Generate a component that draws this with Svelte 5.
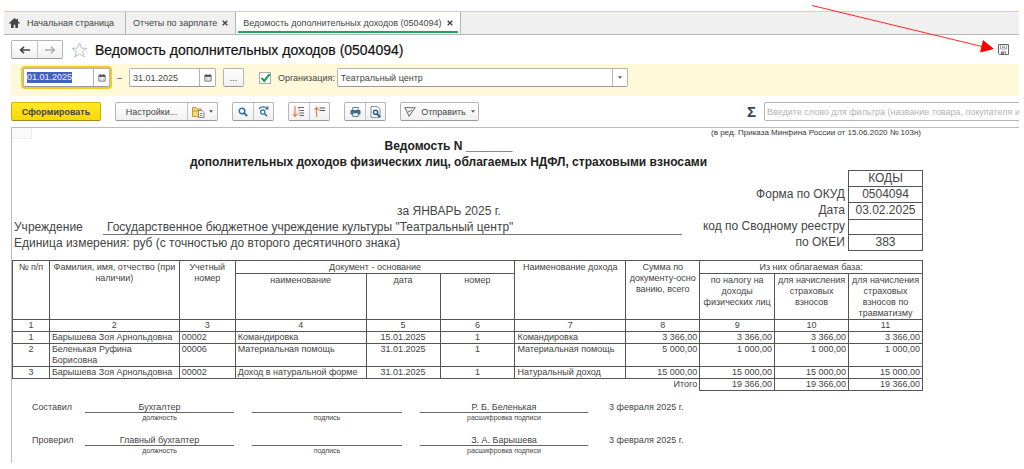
<script>
  const tabs = [
    { title: 'Начальная страница', home: true },
    { title: 'Отчеты по зарплате', closable: true },
    { title: 'Ведомость дополнительных доходов (0504094)', closable: true, active: true }
  ];
  let from = $state('01.01.2025');
  let to = $state('31.01.2025');
  let useOrg = $state(true);

  const columns = [37, 130, 56, 131, 74, 75, 111, 74, 75, 74, 74];
  const rows = [
    ['1', 'Барышева Зоя Арнольдовна', '00002', 'Командировка', '15.01.2025', '1', 'Командировка', '3 366,00', '3 366,00', '3 366,00', '3 366,00'],
    ['2', 'Беленькая Руфина\nБорисовна', '00006', 'Материальная помощь', '31.01.2025', '1', 'Материальная помощь', '5 000,00', '1 000,00', '1 000,00', '1 000,00'],
    ['3', 'Барышева Зоя Арнольдовна', '00002', 'Доход в натуральной форме', '31.01.2025', '1', 'Натуральный доход', '15 000,00', '15 000,00', '15 000,00', '15 000,00']
  ];
  const codes = [
    ['', 'КОДЫ'],
    ['Форма по ОКУД', '0504094'],
    ['Дата', '03.02.2025'],
    ['код по Сводному реестру', ''],
    ['по ОКЕИ', '383']
  ];
  const signers = [
    { role: 'Составил', post: 'Бухгалтер', name: 'Р. Б. Беленькая', date: '3 февраля 2025 г.' },
    { role: 'Проверил', post: 'Главный бухгалтер', name: 'З. А. Барышева', date: '3 февраля 2025 г.' }
  ];

  function align(i) {
    if (i === 0 || i === 4 || i === 5) return 'mid';
    return i > 6 ? 'num' : 'txt';
  }
</script>

{#snippet calendar()}
  <svg width="8" height="8" viewBox="0 0 9 9" aria-hidden="true">
    <path d="M1 1.5h7v6.5H1z" fill="#fff" stroke="#666" />
    <path d="M1 1h7v2.3H1z" fill="#555" />
    <path d="M2.5 0v2M6.5 0v2" stroke="#555" />
    <path d="M2 4.8h5M2 6.4h5" stroke="#999" stroke-width=".8" stroke-dasharray="1 .8" />
  </svg>
{/snippet}

{#snippet caret()}
  <svg class="caret" width="4" height="3" viewBox="0 0 4 3" aria-hidden="true"><path d="M0 .3h4L2 2.700z" fill="#555" /></svg>
{/snippet}

<div class="window">
  <nav class="tabs">
    {#each tabs as tab}
      <div class="tab" class:active={tab.active}>
        <a href="#tab">
          {#if tab.home}
            <svg width="11" height="10" viewBox="0 0 11 10" aria-hidden="true">
              <path d="M5.5 0 0 5l.8.9L2 4.9V10h2.7V6.8h1.6V10H9V4.9l1.2 1L11 5 9 3.2V.8H7.6v1.1z" fill="#444" />
            </svg>
          {/if}
          <span>{tab.title}</span>
        </a>
        {#if tab.closable}
          <button class="close" aria-label="Закрыть">
            <svg width="6" height="6" viewBox="0 0 6 6"><path d="M.7.7l4.6 4.6M5.3.7.7 5.3" stroke="#444" stroke-width="1.4" /></svg>
          </button>
        {/if}
      </div>
    {/each}
  </nav>

  <header class="title">
    <div class="group">
      <button class="nav" aria-label="Назад">
        <svg width="11" height="8" viewBox="0 0 11 8"><path d="M1.5 4H11M5 .8 1.6 4 5 7.2" fill="none" stroke="#444" stroke-width="1.6" /></svg>
      </button>
      <button class="nav" aria-label="Вперед">
        <svg width="11" height="8" viewBox="0 0 11 8"><path d="M0 4h9.5M6 .8 9.4 4 6 7.2" fill="none" stroke="#aaa" stroke-width="1.4" /></svg>
      </button>
    </div>
    <button class="plain star" aria-label="В избранное">
      <svg width="17" height="16" viewBox="0 0 17 16"><path d="M8.500 1l1.900 5.100 5.600.2-4.400 3.400 1.600 5.300-4.700-3.100-4.700 3.100 1.600-5.300L1 6.300l5.600-.2z" fill="#fff" stroke="#b9bfc6" /></svg>
    </button>
    <h1>Ведомость дополнительных доходов (0504094)</h1>
    <button class="plain save" aria-label="Сохранить">
      <svg width="11" height="11" viewBox="0 0 11 11">
        <path d="M.5.5h10v10h-9l-1-1z" fill="#fff" stroke="#666" />
        <path d="M2.500.5v4.500h6v-4.500M3.800 2h3.400M3.800 3.500h3.400" fill="none" stroke="#888" stroke-width=".8" />
        <path d="M3 7.500h5V10H3z" fill="#777" /><path d="M5.800 8.300h1.400V10H5.800z" fill="#fff" />
      </svg>
    </button>
  </header>

  <section class="filter">
    <div class="field date focus">
      <input aria-label="Начало периода" bind:value={from} size="10" />
      <span class="marked" aria-hidden="true">{from}</span>
      <button aria-label="Выбрать начало">{@render calendar()}</button>
    </div>
    <span class="dash">–</span>
    <div class="field date">
      <input aria-label="Конец периода" bind:value={to} size="10" />
      <button aria-label="Выбрать конец">{@render calendar()}</button>
    </div>
    <button class="btn dots">...</button>
    <label class="check">
      <input type="checkbox" aria-label="Отбор по организации" bind:checked={useOrg} />
      <span class="box">
        {#if useOrg}
          <svg width="11" height="10" viewBox="0 0 11 10" aria-hidden="true"><path d="M1.500 4.800 4.200 8 9.800 1.200" fill="none" stroke="#12994a" stroke-width="2" /></svg>
        {/if}
      </span>
    </label>
    <label class="orglabel" for="org">Организация:</label>
    <div class="field org">
      <select id="org"><option>Театральный центр</option></select>
      <span class="drop">{@render caret()}</span>
    </div>
  </section>

  <section class="tools">
    <button class="btn primary">Сформировать</button>
    <div class="group settings">
      <button class="wide">Настройки...</button>
      <button class="variant" aria-label="Варианты отчета">
        <svg width="13" height="12" viewBox="0 0 13 12" aria-hidden="true">
          <path d="M.5 10.500v-9h3.500l1 1.500h4v7.500z" fill="#f6d77c" stroke="#c8973a" />
          <path d="M1 5h8" stroke="#c8973a" />
          <path d="M6.500 4.500h3.500l2 2v5H6.500z" fill="#fff" stroke="#777" stroke-width=".9" />
          <path d="M8 7.500h2.500M8 9.300h2.500" stroke="#5f9b62" />
        </svg>
        {@render caret()}
      </button>
    </div>
    <div class="group">
      <button class="ic" aria-label="Найти">
        <svg width="10" height="10" viewBox="0 0 10 10"><circle cx="4" cy="4" r="2.800" fill="none" stroke="#2b6fa5" stroke-width="1.400" /><path d="M6 6l3.200 3.200" stroke="#2b6fa5" stroke-width="1.800" /></svg>
      </button>
      <button class="ic" aria-label="Найти далее">
        <svg width="11" height="11" viewBox="0 0 11 11"><path d="M1 2.800C2.500.6 7 .2 9 2.300M9.800.3v2.700H7" fill="none" stroke="#2b6fa5" stroke-width="1.200" /><circle cx="4.800" cy="6" r="2.200" fill="none" stroke="#2b6fa5" stroke-width="1.200" /><path d="M6.500 7.700l2.600 2.600" stroke="#2b6fa5" stroke-width="1.500" /></svg>
      </button>
    </div>
    <div class="group">
      <button class="ic" aria-label="Развернуть группы">
        <svg width="12" height="12" viewBox="0 0 12 12"><path d="M2 0v10M0 7.800 2 10.500l2-2.700" fill="none" stroke="#f0794d" stroke-width="1.200" /><path d="M5 1.500h6M7 4.500h4M7 7h4M7 9.500h4" stroke="#666" stroke-width="1.200" /><path d="M6 2v8" stroke="#999" stroke-width=".7" /></svg>
      </button>
      <button class="ic" aria-label="Свернуть группы">
        <svg width="12" height="12" viewBox="0 0 12 12"><path d="M2.500 11V1.500M.5 4l2-2.700 2 2.700" fill="none" stroke="#f0794d" stroke-width="1.200" /><path d="M5.500 2h5.500M5.500 4.500h5.500" stroke="#555" stroke-width="1.200" /></svg>
      </button>
    </div>
    <div class="group">
      <button class="ic" aria-label="Печать">
        <svg width="11" height="10" viewBox="0 0 12 11"><path d="M3 3.500V.6h6v2.900" fill="#fff" stroke="#50748f" /><rect x=".5" y="3.300" width="11" height="5" rx="1" fill="#41698a" /><path d="M3 6.500h6v3.800H3z" fill="#fff" stroke="#41698a" /></svg>
      </button>
      <button class="ic" aria-label="Предварительный просмотр">
        <svg width="11" height="12" viewBox="0 0 11 12"><path d="M1 .6h6.500L10 3v8.400H1z" fill="#fff" stroke="#888" /><circle cx="5.600" cy="6.300" r="2.100" fill="#fff" stroke="#185a94" stroke-width="1.400" /><path d="M7 7.800l3 3.200" stroke="#185a94" stroke-width="1.900" /></svg>
      </button>
    </div>
    <button class="btn send">
      <svg width="12" height="10" viewBox="0 0 12 10" aria-hidden="true"><path d="M.8.700h10.400L5 9.300 3.300 5.400 .8.700M3.300 5.400 8 3" fill="none" stroke="#666" /></svg>
      Отправить
      {@render caret()}
    </button>
    <span class="sigma">Σ</span>
    <input class="search" aria-label="Фильтр" placeholder="Введите слово для фильтра (название товара, покупателя и пр.)" />
  </section>

  <main class="report">
    <div class="corner"></div>
    <div class="sheet">
      <p class="note">(в ред. Приказа Минфина России от 15.06.2020 № 103н)</p>
      <h2>Ведомость N _______</h2>
      <h2>дополнительных доходов физических лиц, облагаемых НДФЛ, страховыми взносами</h2>

      <div class="head">
        <div class="info">
          <p class="period">за ЯНВАРЬ 2025 г.</p>
          <dl class="org-row">
            <dt>Учреждение</dt>
            <dd>Государственное бюджетное учреждение культуры "Театральный центр"</dd>
          </dl>
          <p>Единица измерения: руб (с точностью до второго десятичного знака)</p>
        </div>
        <table class="codes">
          <tbody>
            {#each codes as [label, code]}
              <tr><th>{label}</th><td>{code}</td></tr>
            {/each}
          </tbody>
        </table>
      </div>

      <table class="data">
        <colgroup>
          {#each columns as w}<col style:width="{w / 9.11}%" />{/each}
        </colgroup>
        <thead>
          <tr class="top">
            <th rowspan="2">№ п/п</th>
            <th rowspan="2">Фамилия, имя, отчество (при наличии)</th>
            <th rowspan="2">Учетный номер</th>
            <th colspan="3">Документ - основание</th>
            <th rowspan="2">Наименование дохода</th>
            <th rowspan="2" class="keep">Сумма по<br />документу-осно<br />ванию, всего</th>
            <th colspan="3">Из них облагаемая база:</th>
          </tr>
          <tr class="sub">
            <th>наименование</th>
            <th>дата</th>
            <th>номер</th>
            <th>по налогу на доходы физических лиц</th>
            <th>для начисления страховых взносов</th>
            <th>для начисления страховых взносов по травматизму</th>
          </tr>
          <tr>
            {#each columns as _, i}<th>{i + 1}</th>{/each}
          </tr>
        </thead>
        <tbody>
          {#each rows as row}
            <tr>
              {#each row as cell, i}<td class={align(i)}>{cell}</td>{/each}
            </tr>
          {/each}
        </tbody>
        <tfoot>
          <tr>
            <td class="num total" colspan="8">Итого</td>
            <td class="num">19 366,00</td>
            <td class="num">19 366,00</td>
            <td class="num">19 366,00</td>
          </tr>
        </tfoot>
      </table>

      <div class="signs">
        {#each signers as s}
          <div class="sign">
            <span>{s.role}</span>
            <div><b>{s.post}</b><small>должность</small></div>
            <div><b></b><small>подпись</small></div>
            <div><b>{s.name}</b><small>расшифровка подписи</small></div>
            <span>{s.date}</span>
          </div>
        {/each}
      </div>
    </div>
  </main>

  <svg class="pointer" width="184" height="50" viewBox="0 0 184 50" aria-hidden="true">
    <path d="M2 .5 172 41.500" stroke="#f33" stroke-width="1.100" />
    <path d="M184 44 173 35l-3 12.500z" fill="#f00" />
  </svg>
</div>

<style>
  :global(body) { background: #fff; }
  .window {
    position: relative;
    margin: 11px 5px 0 4px;
    overflow-x: clip;
    font-family: "Liberation Sans", Arial, sans-serif;
    font-size: 9px;
    line-height: 12px;
    color: #444;
  }
  button, input, select {
    box-sizing: border-box;
    min-width: 0;
    margin: 0;
    padding: 0;
    font: inherit;
    color: inherit;
  }
  button { flex: none; }
  svg { display: block; flex: none; }
  h1, h2, p, dl, dd, dt { margin: 0; font-weight: inherit; }

  .tabs {
    display: flex;
    height: 22px;
    background: #f0f0f0;
    border-top: 1px solid #e0d49a;
    border-bottom: 1px solid #b5b5b5;
  }
  .tab {
    display: flex;
    align-items: center;
    gap: 5px;
    padding: 0 7px;
    border-right: 1px solid #b5b5b5;
  }
  .tab a { display: flex; align-items: center; gap: 7px; color: inherit; text-decoration: none; }
  .tab:first-child { padding: 0 11px 0 5px; }
  .tab.active { background: linear-gradient(#22a35a, #22a35a) center bottom 1px / calc(100% - 4px) 2px no-repeat #fff; }
  .close, .plain { border: 0; background: none; }

  .title { display: flex; align-items: center; height: 29px; padding: 0 10px 0 7px; }
  h1 { flex: 1; font-size: 14px; line-height: 16px; color: #111; -webkit-text-stroke: 0.2px #111; }
  .star { margin: 0 7px 0 8px; }

  .group, .btn, .field {
    display: flex;
    box-sizing: border-box;
    height: 19px;
    border: 1px solid #b4b4b4;
    border-bottom-color: #999;
    border-radius: 2px;
    background: linear-gradient(#fff, #f0f0f0);
    white-space: nowrap;
  }
  .group button { display: flex; align-items: center; justify-content: center; border: 0; background: none; }
  .group button + button { border-left: 1px solid #c4c4c4; }
  .group .nav { width: 25px; }
  .group .ic { width: 20px; }

  .filter { display: flex; align-items: center; height: 32px; margin-left: 7px; padding: 0 0 5px 12px; box-sizing: border-box; background: #fff9da; }
  .field { position: relative; background: #fff; }
  .field input { flex: 1; padding-left: 3px; border: 0; background: none; outline: 0; }
  .date { width: 87px; }
  .date button { display: flex; align-items: center; justify-content: center; width: 16px; border: 0; border-left: 1px solid #b4b4b4; background: none; }
  .focus { box-shadow: 0 0 0 2px #f5c829; }
  .marked { position: absolute; left: 3px; top: 3px; line-height: 11px; background: #4560c0; color: #e8ecff; pointer-events: none; }
  .dash { width: 19px; text-align: center; }
  .dots { width: 21px; margin-left: 7px; }
  .check { position: relative; margin: 0 7px 0 15px; }
  .check input { position: absolute; inset: 0; opacity: 0; }
  .box { display: flex; align-items: center; justify-content: center; width: 10px; height: 10px; border: 1px solid #aaa; background: #fff; }
  .orglabel { margin-right: 2px; }
  .org { width: 291px; }
  .org select { flex: 1; appearance: none; padding-left: 3px; border: 0; background: none; outline: 0; }
  .drop { display: flex; align-items: center; justify-content: center; width: 14px; border-left: 1px solid #b4b4b4; }

  .tools { display: flex; align-items: center; gap: 14px; height: 31px; padding-left: 7px; }
  .btn { align-items: center; justify-content: center; }
  .primary {
    width: 90px;
    border-color: #d8b800 #cfae00 #a08a20;
    background: linear-gradient(#ffea2a, #f8d800);
    font-weight: bold;
  }
  .settings .wide { width: 71px; }
  .settings .variant { gap: 4px; width: 30px; }
  .send { gap: 5px; width: 79px; }
  .sigma { margin-left: auto; margin-right: -6px; font-size: 15px; font-weight: bold; color: #345; }
  .search { width: 259px; height: 19px; margin-right: -4px; padding-left: 2px; border: 1px solid #b4b4b4; border-radius: 2px; background: #fff; }
  .search::placeholder { color: #b4b4b4; }

  .report { position: relative; margin-left: 7px; border: solid #bbb; border-width: 1px 0 0 1px; }
  .corner { position: absolute; left: 0; top: 0; width: 19px; height: 10px; border: solid #eee; border-width: 0 1px 1px 0; background: #fafafa; }
  .sheet { margin-right: 96px; }
  .note { padding-right: 2px; text-align: right; font-size: 8px; line-height: 10px; color: #333; }
  h2 { padding-right: 38px; text-align: center; font-size: 12px; line-height: 16px; font-weight: bold; color: #222; }

  .head { display: flex; font-size: 12px; line-height: 16px; }
  .info { flex: 1; padding: 33px 0 0 2px; white-space: nowrap; }
  .period { padding-left: 202px; text-align: center; }
  .org-row { display: flex; }
  .org-row dt { width: 89px; }
  .org-row dd { flex: 1; padding-left: 4px; box-shadow: inset 0 -1px #777; }
  .codes { border-collapse: collapse; }
  .codes th { height: 15px; width: 163px; padding: 0 3px 0 0; font-weight: normal; text-align: right; white-space: nowrap; line-height: 15px; }
  .codes td { width: 73px; padding: 0; border: 1px solid #555; text-align: center; line-height: 15px; }

  .data { width: 100%; margin-top: 9px; border-collapse: collapse; table-layout: fixed; line-height: 11px; }
  .data th, .data td { height: 11px; padding: 0 2px; border: 1px solid #555; font-weight: normal; vertical-align: top; }
  .data td { white-space: pre-line; }
  .data th { padding: 0; text-align: center; }
  .data .keep { white-space: nowrap; }
  .data .top th { height: 11px; padding-top: 1px; }
  .data .sub th { height: 44px; padding-top: 1px; }
  .data .mid { text-align: center; }
  .data .num { text-align: right; white-space: nowrap; }
  .data .total { border-width: 1px 1px 0 0; }

  .signs { padding: 10px 0 0 20px; }
  .sign { display: grid; grid-template-columns: 35px 149fr 150fr 168fr 317fr; gap: 18px; height: 33px; }
  .sign:last-child { height: 29px; }
  .sign > span { line-height: 13px; }
  .sign > span:last-child { padding-left: 3px; }
  .sign div { text-align: center; }
  .sign b { display: block; height: 11px; border-bottom: 1px solid #666; font-weight: normal; line-height: 13px; }
  .sign small { display: block; font-size: 7px; line-height: 10px; }

  .pointer { position: absolute; right: 25px; top: -6px; }
</style>
